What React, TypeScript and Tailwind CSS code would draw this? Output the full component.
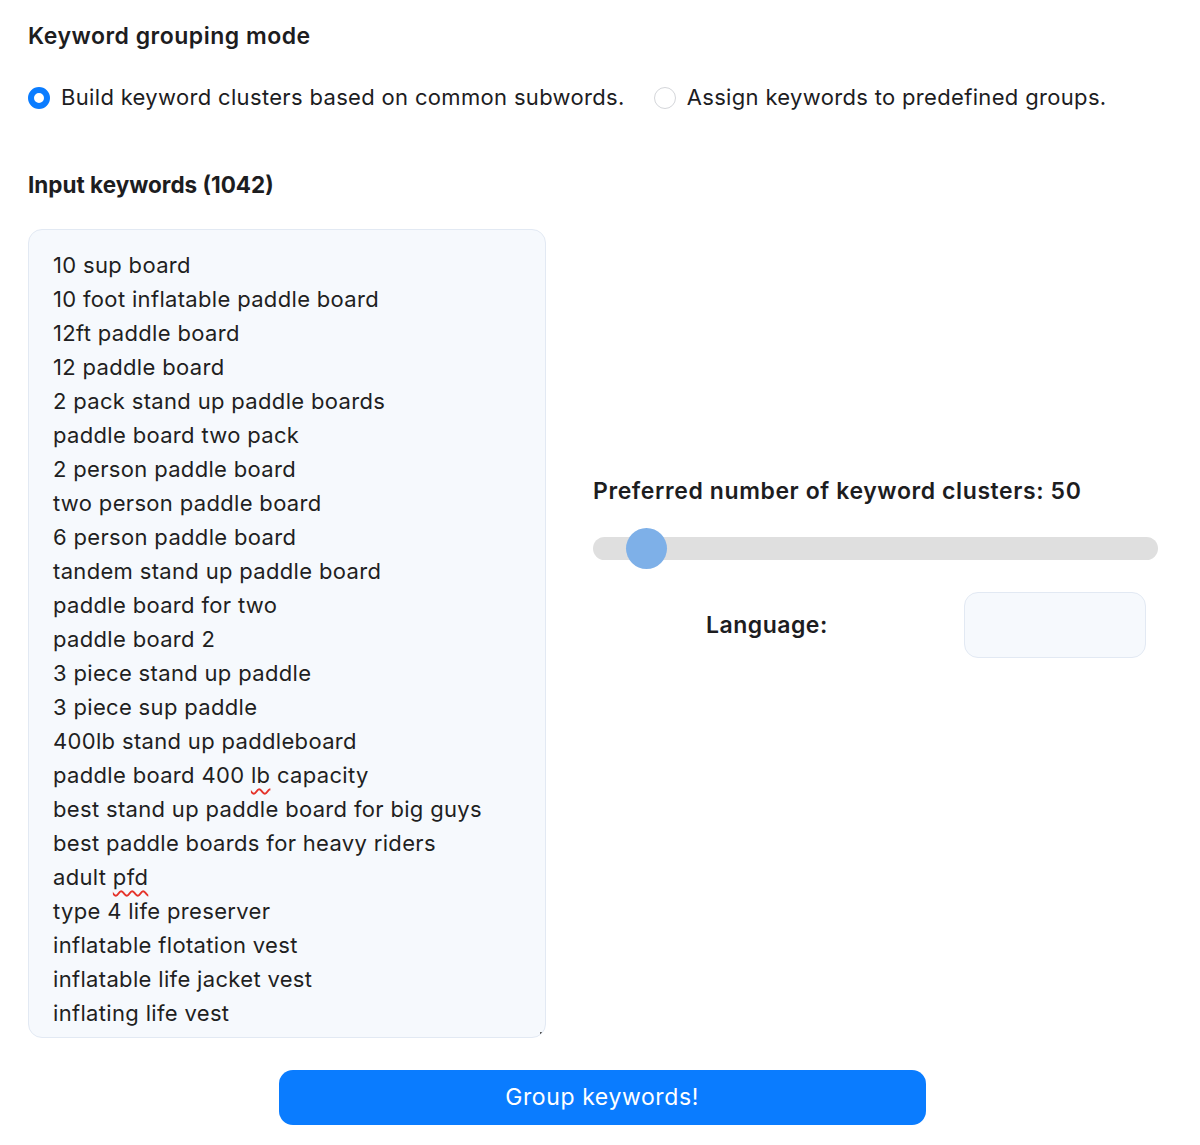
const keywords: { text: string; typo?: string[] }[] = [
  { text: '10 sup board' },
  { text: '10 foot inflatable paddle board' },
  { text: '12ft paddle board' },
  { text: '12 paddle board' },
  { text: '2 pack stand up paddle boards' },
  { text: 'paddle board two pack' },
  { text: '2 person paddle board' },
  { text: 'two person paddle board' },
  { text: '6 person paddle board' },
  { text: 'tandem stand up paddle board' },
  { text: 'paddle board for two' },
  { text: 'paddle board 2' },
  { text: '3 piece stand up paddle' },
  { text: '3 piece sup paddle' },
  { text: '400lb stand up paddleboard' },
  { text: 'paddle board 400 lb capacity', typo: ['paddle board 400 ', 'lb', ' capacity'] },
  { text: 'best stand up paddle board for big guys' },
  { text: 'best paddle boards for heavy riders' },
  { text: 'adult pfd', typo: ['adult ', 'pfd', ''] },
  { text: 'type 4 life preserver' },
  { text: 'inflatable flotation vest' },
  { text: 'inflatable life jacket vest' },
  { text: 'inflating life vest' },
]

function Radio({ checked, label }: { checked?: boolean; label: string }) {
  return (
    <label className="flex items-center gap-[11px]">
      {checked ? (
        <span className="h-[22px] w-[22px] rounded-full border-[6px] border-[#0a7cff] bg-white" />
      ) : (
        <span className="h-[22px] w-[22px] rounded-full border border-[#d4d6da] bg-white" />
      )}
      <span className="text-[22px] tracking-[0.33px] text-[#1d1d1f]">{label}</span>
    </label>
  )
}

export default function App() {
  return (
    <div className="min-h-[1145px] bg-white px-[28px] pt-[20px] text-[#1d1d1f] font-['Inter',sans-serif]">
      <h2 className="text-[23px] font-semibold leading-[32px] tracking-[0.5px]">Keyword grouping mode</h2>

      <div className="mt-[29px] flex items-center gap-[29px]">
        <Radio checked label="Build keyword clusters based on common subwords." />
        <Radio label="Assign keywords to predefined groups." />
      </div>

      <h2 className="mt-[55px] text-[22.5px] font-bold leading-[32px]">Input keywords (1042)</h2>

      <div className="mt-[28px] flex gap-[47px]">
        <div className="relative h-[809px] w-[518px] shrink-0 overflow-hidden rounded-[14px] border border-[#e2e9f3] bg-[#f6f9fd] pl-[24px] pt-[18px]">
          {keywords.map((k) => (
            <div key={k.text} className="text-[22px] leading-[34px] tracking-[0.33px] text-[#1f1f22] whitespace-nowrap">
              {k.typo ? (
                <>
                  {k.typo[0]}
                  <span className="underline decoration-wavy decoration-[#e5332a] decoration-[1.5px] underline-offset-[5px]">
                    {k.typo[1]}
                  </span>
                  {k.typo[2]}
                </>
              ) : (
                k.text
              )}
            </div>
          ))}
          <span className="absolute bottom-[3px] right-[3px] h-[2px] w-[2px] bg-[#555]" />
        </div>

        {/* settings */}
        <div className="flex-1 pr-[14px] pt-[246px]">
          <div className="text-[23px] font-semibold leading-[32px] tracking-[0.6px]">
            Preferred number of keyword clusters: 50
          </div>
          <div className="relative mt-[30px] h-[23px] w-full rounded-full bg-[#dfdfdf]">
            <span className="absolute left-[33px] top-[-9px] h-[41px] w-[41px] rounded-full bg-[#7eb0e8]" />
          </div>
          <div className="mt-[32px] flex items-center">
            <span className="ml-[113px] text-[23px] font-semibold tracking-[0.5px]">Language:</span>
            <div className="ml-[136px] h-[66px] w-[182px] rounded-[14px] border border-[#e2e9f3] bg-[#f6f9fd]" />
          </div>
        </div>
      </div>

      <div className="mt-[32px] flex justify-center pl-[4px]">
        <button className="h-[55px] w-[647px] rounded-[14px] bg-[#0a7cff] text-[23px] text-white tracking-[0.6px]">
          Group keywords!
        </button>
      </div>
    </div>
  )
}
